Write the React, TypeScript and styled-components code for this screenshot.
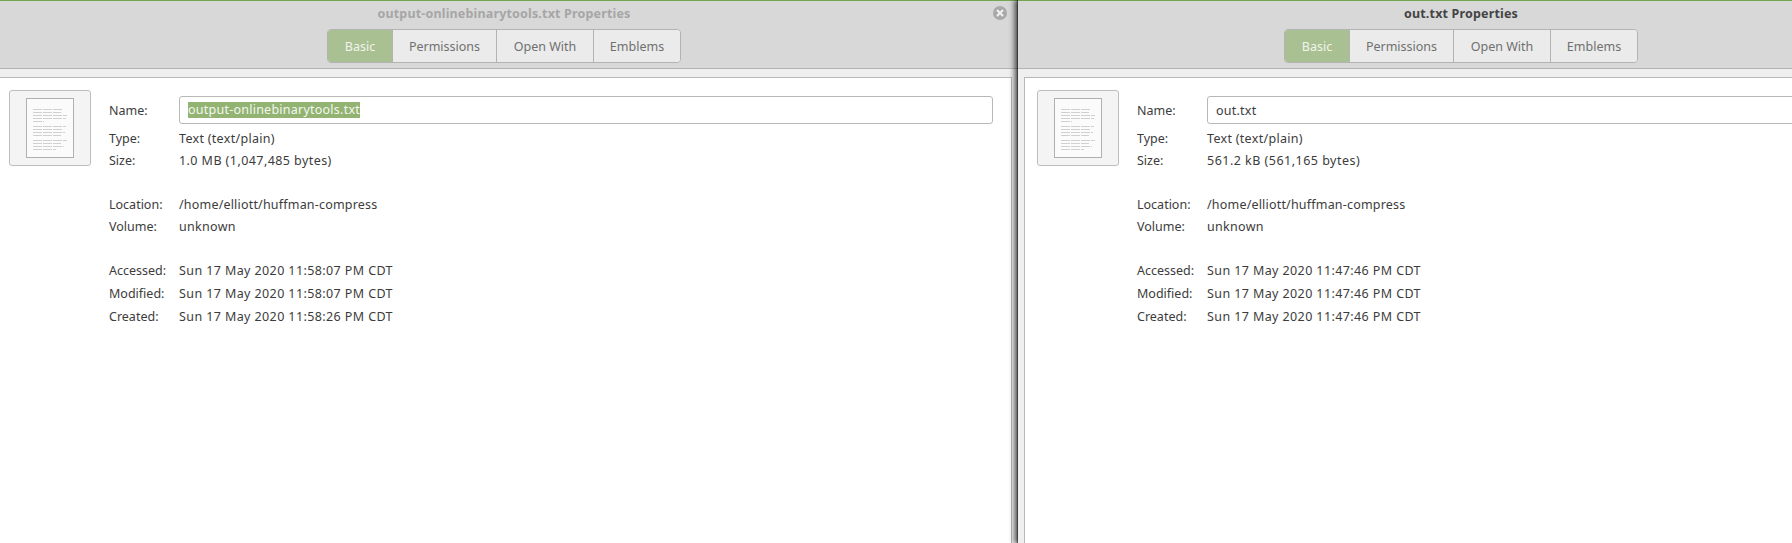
import { createGlobalStyle, styled } from "styled-components";

const GlobalStyle = createGlobalStyle`
  html, body {
    margin: 0;
    padding: 0;
    height: 100%;
    background: #ffffff;
  }
  #root {
    height: 100%;
  }
  * {
    box-sizing: border-box;
  }
`;

const Desktop = styled.div`
  display: flex;
  width: 100%;
  height: 100vh;
  overflow: hidden;
  font-family: "Noto Sans", "Open Sans", sans-serif;
  font-size: 12.5px;
  color: #3c3c3c;
`;

const Window = styled.section<{ $width: number; $shift?: number; $front?: boolean }>`
  flex: none;
  width: ${(p) => p.$width}px;
  margin-left: ${(p) => p.$shift ?? 0}px;
  display: flex;
  flex-direction: column;
  background: #efefef;
  position: relative;
  z-index: ${(p) => (p.$front ? 2 : 1)};
  box-shadow: ${(p) =>
    p.$front ? "-1px 0 1px rgba(0, 0, 0, 0.42), -3px 0 4px rgba(0, 0, 0, 0.42), -5px 0 5px rgba(0, 0, 0, 0.25)" : "none"};
`;

const Header = styled.header`
  flex: none;
  height: 69px;
  border-top: 1px solid #74a553;
  border-bottom: 1px solid #b3b3b3;
  background: #d8d8d8;
  display: flex;
  flex-direction: column;
  align-items: center;
`;

const TitleBar = styled.div`
  width: 100%;
  height: 28px;
  padding: 0 8px 4px;
  display: grid;
  grid-template-columns: 1fr auto 1fr;
  align-items: center;
`;

const Title = styled.h1<{ $active?: boolean }>`
  grid-column: 2;
  margin: 0;
  font-size: 12.5px;
  font-weight: 700;
  letter-spacing: 0.17px;
  color: ${(p) => (p.$active ? "#444444" : "#a6a6a6")};
`;

const CloseButton = styled.button`
  grid-column: 3;
  justify-self: end;
  width: 14px;
  height: 14px;
  margin-right: 3px;
  padding: 0;
  border: none;
  border-radius: 50%;
  background: #a9a9a9;
  display: flex;
  align-items: center;
  justify-content: center;
`;

const Tabs = styled.nav`
  display: flex;
  height: 34px;
  border: 1px solid #b3b3b3;
  border-radius: 4px;
  overflow: hidden;
  background: #ebebeb;
`;

const Tab = styled.div<{ $active?: boolean; $width: number }>`
  width: ${(p) => p.$width}px;
  display: flex;
  align-items: center;
  justify-content: center;
  font-size: 12.5px;
  background: ${(p) => (p.$active ? "#a9c092" : "#ebebeb")};
  color: ${(p) => (p.$active ? "#f1f4ec" : "#707070")};
  & + & {
    border-left: 1px solid #b3b3b3;
  }
`;

const Body = styled.div`
  flex: 1;
  min-height: 0;
  padding: 8px 6px 0;
`;

const Content = styled.div`
  height: 100%;
  background: #ffffff;
  border: 1px solid #b8b8b8;
  border-bottom: none;
  padding: 12px 18px 0 12px;
  display: flex;
  gap: 18px;
`;

const IconFrame = styled.div`
  flex: none;
  width: 82px;
  height: 76px;
  background: #f4f4f4;
  border: 1px solid #bdbdbd;
  border-radius: 3px;
  display: flex;
  align-items: center;
  justify-content: center;
`;

const Details = styled.div`
  flex: 1;
  min-width: 0;
  padding-top: 6px;
`;

const Group = styled.div<{ $gap?: number }>`
  margin-top: ${(p) => p.$gap ?? 0}px;
`;

const Row = styled.div<{ $height?: number }>`
  display: grid;
  grid-template-columns: 70px 1fr;
  align-items: center;
  height: ${(p) => p.$height ?? 22.4}px;
  white-space: nowrap;
`;

const Value = styled.span<{ $track?: number }>`
  letter-spacing: ${(p) => p.$track ?? 0.3}px;
`;

const NameField = styled.div`
  height: 28px;
  padding: 0 8px;
  border: 1px solid #b8b8b8;
  border-radius: 3px;
  background: #ffffff;
  display: flex;
  align-items: center;
  letter-spacing: 0.24px;
`;

const Selected = styled.span`
  background: #92b372;
  color: #f4f7ef;
  line-height: 16px;
`;

const docLines: [number, number][] = [
  [11, 29], [14, 28], [17, 34], [20, 33], [23, 11],
  [28, 33], [31, 30], [34, 32], [37, 28],
  [42, 34], [45, 28], [48, 31], [51, 23],
];

const DocIcon = () => (
  <svg width="48" height="60" viewBox="0 0 48 60">
    <rect x="0.5" y="0.5" width="47" height="59" fill="#fbfbfb" stroke="#b0b0b0" />
    {docLines.map(([y, w]) => (
      <line key={y} x1="7" x2={7 + w} y1={y + 0.5} y2={y + 0.5} stroke="#d0d0d0" strokeWidth="1" strokeDasharray="9 1" />
    ))}
  </svg>
);

const CloseIcon = () => (
  <svg width="8" height="8" viewBox="0 0 8 8">
    <path d="M1 1l6 6M7 1l-6 6" stroke="#f2f2f2" strokeWidth="2" fill="none" />
  </svg>
);

interface FileInfo {
  title: string;
  name: string;
  selected?: boolean;
  size: string;
  sizeTrack: number;
  accessed: string;
  modified: string;
  created: string;
}

const left: FileInfo = {
  title: "output-onlinebinarytools.txt Properties",
  name: "output-onlinebinarytools.txt",
  selected: true,
  size: "1.0 MB (1,047,485 bytes)",
  sizeTrack: 0.43,
  accessed: "Sun 17 May 2020 11:58:07 PM CDT",
  modified: "Sun 17 May 2020 11:58:07 PM CDT",
  created: "Sun 17 May 2020 11:58:26 PM CDT",
};

const right: FileInfo = {
  title: "out.txt Properties",
  name: "out.txt",
  size: "561.2 kB (561,165 bytes)",
  sizeTrack: 0.48,
  accessed: "Sun 17 May 2020 11:47:46 PM CDT",
  modified: "Sun 17 May 2020 11:47:46 PM CDT",
  created: "Sun 17 May 2020 11:47:46 PM CDT",
};

const PropertiesWindow = ({ info, width, shift, front }: { info: FileInfo; width: number; shift?: number; front?: boolean }) => (
  <Window $width={width} $shift={shift} $front={front}>
    <Header>
      <TitleBar>
        <Title $active={front}>{info.title}</Title>
        {!front && (
          <CloseButton aria-label="Close">
            <CloseIcon />
          </CloseButton>
        )}
      </TitleBar>
      <Tabs>
        <Tab $active $width={64}>Basic</Tab>
        <Tab $width={104}>Permissions</Tab>
        <Tab $width={97}>Open With</Tab>
        <Tab $width={87}>Emblems</Tab>
      </Tabs>
    </Header>
    <Body>
      <Content>
        <IconFrame>
          <DocIcon />
        </IconFrame>
        <Details>
          <Row $height={28}>
            <span>Name:</span>
            <NameField>{info.selected ? <Selected>{info.name}</Selected> : info.name}</NameField>
          </Row>
          <Group $gap={3}>
            <Row><span>Type:</span><Value>Text (text/plain)</Value></Row>
            <Row><span>Size:</span><Value $track={info.sizeTrack}>{info.size}</Value></Row>
          </Group>
          <Group $gap={21.5}>
            <Row><span>Location:</span><Value $track={0.19}>/home/elliott/huffman-compress</Value></Row>
            <Row><span>Volume:</span><Value>unknown</Value></Row>
          </Group>
          <Group $gap={20.5}>
            <Row $height={23}><span>Accessed:</span><Value $track={0.4}>{info.accessed}</Value></Row>
            <Row $height={23}><span>Modified:</span><Value $track={0.4}>{info.modified}</Value></Row>
            <Row $height={23}><span>Created:</span><Value $track={0.4}>{info.created}</Value></Row>
          </Group>
        </Details>
      </Content>
    </Body>
  </Window>
);

export default function App() {
  return (
    <>
      <GlobalStyle />
      <Desktop>
        <PropertiesWindow info={left} width={1028} shift={-10} />
        <PropertiesWindow info={right} width={886} front />
      </Desktop>
    </>
  );
}
